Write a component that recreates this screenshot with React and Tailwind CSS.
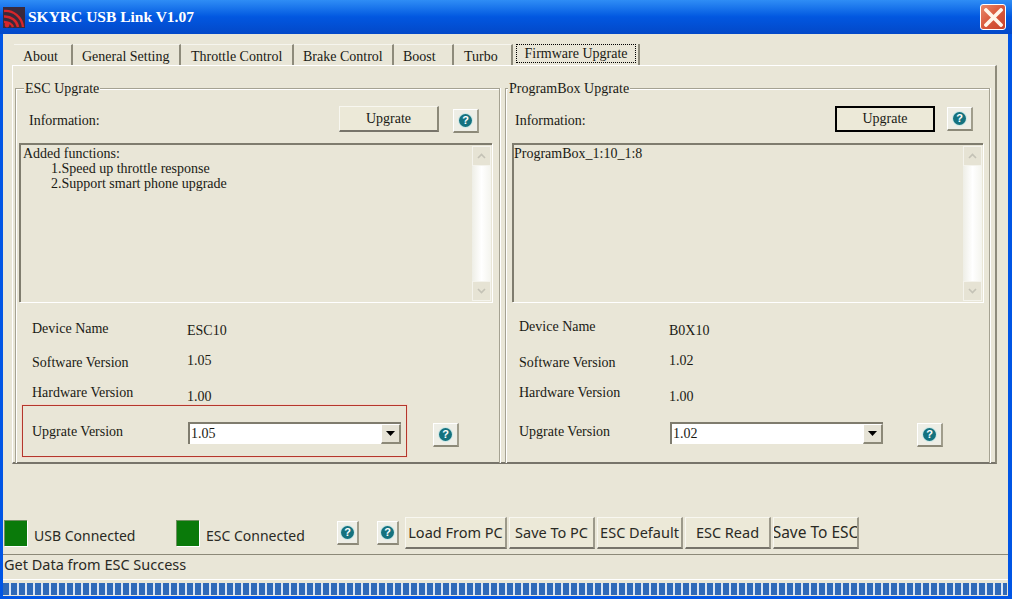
import React from "react";

const tabs = [
  { name: "About", w: "w-[59px]", pad: "pl-[9px]" },
  { name: "General Setting", w: "w-[108px]", pad: "pl-[9px]" },
  { name: "Throttle Control", w: "w-[113px]", pad: "pl-[10px]" },
  { name: "Brake Control", w: "w-[100px]", pad: "pl-[9px]" },
  { name: "Boost", w: "w-[60px]", pad: "pl-[9px]" },
  { name: "Turbo", w: "w-[59px]", pad: "pl-[10px]" },
];

function Logo() {
  return (
    <svg width="22" height="21" viewBox="0 0 22 21" className="mr-[2px] shrink-0">
      <rect width="22" height="21" fill="#3a2a3c" />
      <g fill="none" stroke="#d8262a" strokeWidth="2.4">
        <path d="M1 4 C10 3 19 10 20 20" />
        <path d="M1 9.5 C8 9 14 14 15 20" />
        <path d="M1 15 C5 15 9 17 10 20" />
      </g>
      <circle cx="4" cy="18" r="2.4" fill="#d8262a" />
    </svg>
  );
}

function Help({ className = "", w = "w-[26px]" }) {
  return (
    <div className={"flex h-[24px] shrink-0 items-center justify-center bg-[#eeeee6] border-t border-l border-white border-r-2 border-b-2 border-r-[#a09d8c] border-b-[#8c8978] " + w + " " + className}>
      <div className="flex h-[13px] w-[13px] items-center justify-center rounded-full bg-[#14727f] font-['Liberation_Sans',sans-serif] text-[11px] font-bold leading-none text-white shadow-[0_0_0_1px_#cfe8e6]">
        ?
      </div>
    </div>
  );
}

function Arrow({ down }) {
  return (
    <svg width="9" height="6" viewBox="0 0 9 6" className={down ? "" : "rotate-180"}>
      <path d="M1 1 L4.5 4.5 L8 1" fill="none" stroke="#c4c2b6" strokeWidth="1.6" />
    </svg>
  );
}

function Scrollbar() {
  return (
    <div className="flex w-[19px] shrink-0 flex-col justify-between self-stretch bg-gradient-to-r from-[#eeeee6] via-white to-[#f4f4ee]">
      <div className="flex h-[20px] items-center justify-center border border-[#f4f3ec] bg-[#e6e3d4]">
        <Arrow />
      </div>
      <div className="flex h-[20px] items-center justify-center border border-[#f4f3ec] bg-[#e6e3d4]">
        <Arrow down />
      </div>
    </div>
  );
}

function Select({ value, className = "" }) {
  return (
    <div className={"flex h-[22px] w-[213px] items-stretch border-t-2 border-l-2 border-[#7f7c6e] bg-white " + className}>
      <span className="flex-1 pl-[1px] pt-[1px] leading-[18px]">{value}</span>
      <div className="flex w-[20px] items-center justify-center border border-r-2 border-b-2 border-[#8c8978] border-t-white border-l-white bg-[#e6e3d6]">
        <svg width="9" height="5" viewBox="0 0 9 5">
          <path d="M0 0 H9 L4.5 5 Z" fill="#000" />
        </svg>
      </div>
    </div>
  );
}

function Row({ label, value, labelTop, valueTop, labelLeft, valueW }) {
  return (
    <div className={"flex h-[32px] items-start pt-[1px] " + labelLeft}>
      <span className={"leading-4 " + labelTop + " " + valueW}>{label}</span>
      <span className={"leading-4 " + valueTop}>{value}</span>
    </div>
  );
}

function Group({ title, legendLeft, info }) {
  return (
    <div className="relative h-[375px] w-[485px] shrink-0 border-t border-l border-r border-[#a5a292] shadow-[inset_1px_1px_0_#fff,1px_0_0_#fff]">
      <div className={"absolute -top-[8px] bg-[#e9e6d7] px-[1px] leading-4 " + legendLeft}>{title}</div>
      {info}
    </div>
  );
}

function Panel({ boxLeft, boxW, infoLeft, infoW, btnBorder, helpLeft, lines, children }) {
  return (
    <>
      <div className={"flex h-[26px] items-center mt-[17px] " + infoLeft}>
        <span className={"pt-[2px] " + infoW}>Information:</span>
        <div className={"flex h-[26px] w-[100px] items-center justify-center pb-[1px] " + btnBorder}>Upgrate</div>
        <Help className={helpLeft} />
      </div>
      <div className={"mt-[11px] flex h-[159px] border-t-2 border-l-2 border-[#7f7c6e] shadow-[1px_1px_0_#fff] " + boxLeft + " " + boxW}>
        <div className="flex-1 pt-[1px] leading-[15px]">{lines}</div>
        <div className="flex w-[19px] py-[1px] mr-[1px]">
          <Scrollbar />
        </div>
      </div>
      <div className="mt-[16px]">{children}</div>
    </>
  );
}

const plainBtn = "bg-[#ece9d8] border-t border-l border-[#f8f7f0] border-r-2 border-b-2 border-r-[#8c8978] border-b-[#77746a]";
const defaultBtn = "bg-[#ece9d8] border-2 border-black";
const toolBtn = "flex h-[32px] items-center justify-center overflow-hidden whitespace-nowrap bg-[#ece9d8] border-t border-l border-[#f8f7f0] border-r-2 border-b-2 border-r-[#9c998a] border-b-[#77746a]";

export default function App() {
  return (
    <div className="flex h-[599px] w-[1012px] flex-col overflow-hidden bg-[#0055e5] font-['Liberation_Serif',serif] text-[14px] text-[#1a1a14]">
      {/* Title bar */}
      <div className="flex h-[34px] shrink-0 items-center bg-gradient-to-b from-[#2f8df5] via-[#0257e0] to-[#0348c8] pl-[3px] pr-[6px]">
        <Logo />
        <span className="flex-1 pl-[1px] pb-[1px] text-[15.5px] font-bold text-white">SKYRC USB Link V1.07</span>
        <div className="flex h-[26px] w-[26px] items-center justify-center rounded-[3px] border border-white bg-gradient-to-br from-[#e8886a] via-[#d9583c] to-[#c8432a]">
          <svg width="19" height="19" viewBox="0 0 19 19">
            <path d="M2 2 L17 17 M17 2 L2 17" stroke="#fff5ea" strokeWidth="3.8" strokeLinecap="round" />
          </svg>
        </div>
      </div>

      {/* Client area */}
      <div className="flex flex-1 flex-col bg-[#e9e6d7] ml-[3px] mr-[4px] mb-[3px]">
        <div className="pl-[9px] pr-[11px] pt-[10px]">
          <div className="flex h-[21px] pl-[2px] items-end">
            {tabs.map((t) => (
              <div key={t.name} className={"flex h-[21px] items-center border-t border-[#f6f5ee] border-r-2 border-r-[#8e8b7b] whitespace-nowrap pt-[2px] " + t.w + " " + t.pad}>
                {t.name}
              </div>
            ))}
            <div className="ml-[1px] h-[21px] w-[126px] border-r-2 border-[#8e8b7b] pl-[2px] pr-[2px]">
              <div className="flex h-[19px] items-center justify-center border border-dotted border-black">Firmware Upgrate</div>
            </div>
          </div>
          <div className="h-[399px] border-t border-l border-white border-r-2 border-b-2 border-r-[#8e8b7b] border-b-[#77746a]">
            <div className="flex gap-[5px] pl-[2px] pt-[22px]">
              <Group
                title="ESC Upgrate"
                legendLeft="left-[8px]"
                info={
                  <Panel
                    infoLeft="pl-[13px]"
                    infoW="w-[310px]"
                    btnBorder={plainBtn}
                    helpLeft="ml-[14px] mt-[3px]"
                    boxLeft="ml-[3px]"
                    boxW="w-[473px]"
                    lines={
                      <div className="pl-[2px]">
                        <div>Added functions:</div>
                        <div className="pl-[28px]">1.Speed up throttle response</div>
                        <div className="pl-[28px]">2.Support smart phone upgrade</div>
                      </div>
                    }
                  >
                    <Row label="Device Name" value="ESC10" labelLeft="pl-[16px]" valueW="w-[155px]" labelTop="mt-[2px]" valueTop="mt-[4px]" />
                    <Row label="Software Version" value="1.05" labelLeft="pl-[16px]" valueW="w-[155px]" labelTop="mt-[4px]" valueTop="mt-[2px]" />
                    <Row label="Hardware Version" value="1.00" labelLeft="pl-[16px]" valueW="w-[155px]" labelTop="mt-[2px]" valueTop="mt-[6px]" />
                    <div className="flex items-start pl-[16px]">
                      <span className="mt-[10px] w-[156px] leading-4">Upgrate Version</span>
                      <Select value="1.05" className="mt-[8px]" />
                      <Help className="ml-[32px] mt-[9px]" />
                    </div>
                  </Panel>
                }
              />
              <Group
                title="ProgramBox Upgrate"
                legendLeft="left-[2px]"
                info={
                  <Panel
                    infoLeft="pl-[9px]"
                    infoW="w-[320px]"
                    btnBorder={defaultBtn}
                    helpLeft="ml-[12px]"
                    boxLeft="ml-[6px]"
                    boxW="w-[471px]"
                    lines={<div>ProgramBox_1:10_1:8</div>}
                  >
                    <Row label="Device Name" value="B0X10" labelLeft="pl-[13px]" valueW="w-[150px]" labelTop="mt-0" valueTop="mt-[4px]" />
                    <Row label="Software Version" value="1.02" labelLeft="pl-[13px]" valueW="w-[150px]" labelTop="mt-[4px]" valueTop="mt-[2px]" />
                    <Row label="Hardware Version" value="1.00" labelLeft="pl-[13px]" valueW="w-[150px]" labelTop="mt-[2px]" valueTop="mt-[6px]" />
                    <div className="flex items-start pl-[13px]">
                      <span className="mt-[10px] w-[151px] leading-4">Upgrate Version</span>
                      <Select value="1.02" className="mt-[8px]" />
                      <Help className="ml-[34px] mt-[9px]" />
                    </div>
                  </Panel>
                }
              />
            </div>
          </div>
        </div>

        {/* Red highlight drawn over the left panel */}
        <div className="relative">
          <div className="absolute left-[19px] -top-[59px] h-[52px] w-[385px] border border-[#b4372c] shadow-[0_0_0_1px_#f3d9cc]" />
        </div>

        {/* Toolbar */}
        <div className="mt-[53px] flex h-[32px] items-center pl-[1px] font-['Noto_Sans',sans-serif] text-[14.5px] text-[#2a2a24]">
          <div className="h-[26px] w-[23px] bg-[#0a7a0a] shadow-[inset_1px_1px_0_#6f8f60,1px_1px_0_#fff]" />
          <span className="ml-[7px] w-[142px] pt-[4px] text-[14px]">USB Connected</span>
          <div className="h-[26px] w-[23px] bg-[#0a7a0a] shadow-[inset_1px_1px_0_#6f8f60,1px_1px_0_#fff]" />
          <span className="ml-[7px] w-[131px] pt-[4px] text-[14px]">ESC Connected</span>
          <Help w="w-[22px]" />
          <Help w="w-[22px]" className="ml-[18px]" />
          <div className="ml-[6px] flex gap-[2px]">
            <div className={toolBtn + " w-[102px]"}>Load From PC</div>
            <div className={toolBtn + " w-[86px]"}>Save To PC</div>
            <div className={toolBtn + " w-[86px]"}>ESC Default</div>
            <div className={toolBtn + " w-[86px]"}>ESC Read</div>
            <div className={toolBtn + " w-[86px] text-[15.5px]"}>
              <span className="shrink-0">Save To ESC</span>
            </div>
          </div>
        </div>

        {/* Status bar */}
        <div className="mt-[5px] flex h-[26px] items-start border-t border-[#8c8978] border-b border-b-white pl-[1px] font-['Noto_Sans',sans-serif] text-[14.5px] leading-[19px] text-[#2a2a24]">
          Get Data from ESC Success
        </div>
        <div className="mt-[3px] h-[12px] mr-[1px] bg-[repeating-linear-gradient(90deg,#2f69b8_0,#2f69b8_6px,#d8e4f4_6px,#d8e4f4_8px)]" />
      </div>
    </div>
  );
}
